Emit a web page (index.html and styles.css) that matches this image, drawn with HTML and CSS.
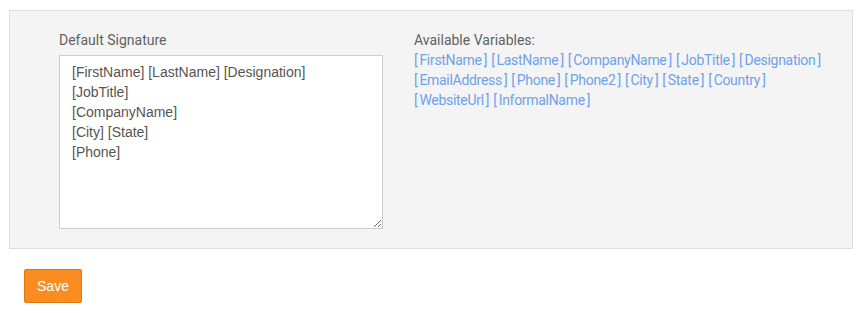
FILE: index.html
```html
<!DOCTYPE html>
<html>
<head>
<meta charset="utf-8">
<link rel="stylesheet" href="styles.css">
</head>
<body>
<div class="panel">
  <div class="col-left">
    <label class="field-label" for="sig">Default Signature</label>
    <textarea id="sig" class="sig-input">[FirstName] [LastName] [Designation]
[JobTitle]
[CompanyName]
[City] [State]
[Phone]</textarea>
  </div>
  <div class="col-right">
    <div class="field-label">Available Variables:</div>
    <div class="vars">
      <div class="vars-line"><span class="br">[</span>FirstName<span class="br">]</span><span class="br">[</span>LastName<span class="br">]</span><span class="br">[</span>CompanyName<span class="br">]</span><span class="br">[</span>JobTitle<span class="br">]</span><span class="br">[</span>Designation<span class="br">]</span></div>
      <div class="vars-line"><span class="br">[</span>EmailAddress<span class="br">]</span><span class="br">[</span>Phone<span class="br">]</span><span class="br">[</span>Phone2<span class="br">]</span><span class="br">[</span>City<span class="br">]</span><span class="br">[</span>State<span class="br">]</span><span class="br">[</span>Country<span class="br">]</span></div>
      <div class="vars-line"><span class="br">[</span>WebsiteUrl<span class="br">]</span><span class="br">[</span>InformalName<span class="br">]</span></div>
    </div>
  </div>
</div>
<div class="actions">
  <button class="btn-save">Save</button>
</div>
</body>
</html>
```
FILE: styles.css
```css
html, body {
  margin: 0;
  padding: 0;
  background: #fff;
}
body {
  padding: 10px 13px 0 9px;
  font-family: "Liberation Sans", Arial, sans-serif;
}
.panel {
  display: flex;
  gap: 31px;
  background: #f4f4f4;
  border: 1px solid #dedede;
  padding: 19px 0 19px 49px;
  box-sizing: border-box;
  height: 239px;
}
.col-left {
  display: flex;
  flex-direction: column;
  width: 324px;
}
.field-label {
  font-family: Roboto, "Noto Sans", sans-serif;
  font-size: 14px;
  line-height: 20px;
  color: #626262;
  letter-spacing: 0;
  margin-bottom: 5px;
}
.col-right .field-label {
  margin-bottom: 0;
}
.sig-input {
  width: 324px;
  height: 174px;
  box-sizing: border-box;
  border: 1px solid #cccccc;
  background: #fff;
  margin: 0;
  padding: 6px 12px;
  font-family: "Liberation Sans", Arial, sans-serif;
  font-size: 14px;
  line-height: 20px;
  color: #555;
  resize: both;
  outline: none;
}
.vars {
  font-family: Roboto, "Noto Sans", sans-serif;
  font-size: 14px;
  line-height: 20px;
  color: #6ea2ea;
  letter-spacing: -0.3px;
}
.vars-line {
  white-space: nowrap;
}
.br {
  padding: 0 2px;
}
.vars-line .br:first-child {
  padding-left: 0;
}
.actions {
  padding: 20px 0 0 15px;
}
.btn-save {
  width: 58px;
  height: 34px;
  background: #f98d22;
  border: 1px solid #e0760e;
  border-radius: 2px;
  color: #fff;
  font-family: "Liberation Sans", Arial, sans-serif;
  font-size: 14px;
  padding: 0;
  cursor: pointer;
}
```
